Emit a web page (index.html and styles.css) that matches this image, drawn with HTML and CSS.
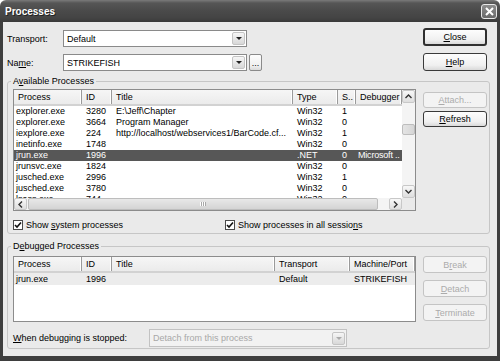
FILE: index.html
```html
<!DOCTYPE html>
<html>
<head>
    <title>Processes</title>
    <link rel="stylesheet" href="styles.css">
</head>
<body>
    <div class="window">
        <div class="titlebar">
            <span class="title">Processes</span>
            <span class="title-close">
                <svg width="9" height="9" viewBox="0 0 9 9"><path d="M1 1L8 8M8 1L1 8" stroke="#fff" stroke-width="2" fill="none"/></svg>
            </span>
        </div>

        <div class="client">
            <!-- Transport / Name -->
            <div class="top">
                <div class="fields">
                    <div class="field-row">
                        <span class="field-label">Transport:</span>
                        <div class="combo">
                            <span class="combo-text">Default</span>
                            <span class="combo-btn"><i class="arrow"></i></span>
                        </div>
                    </div>
                    <div class="field-row">
                        <span class="field-label">Na<u>m</u>e:</span>
                        <div class="combo">
                            <span class="combo-text">STRIKEFISH</span>
                            <span class="combo-btn"><i class="arrow"></i></span>
                        </div>
                        <button class="btn btn-dots">...</button>
                    </div>
                </div>
                <div class="btn-col top-btns">
                    <button class="btn btn-default"><u>C</u>lose</button>
                    <button class="btn"><u>H</u>elp</button>
                </div>
            </div>

            <!-- Available Processes -->
            <fieldset class="group group-available">
                <legend>A<u>v</u>ailable Processes</legend>
                <div class="group-body">
                    <div class="group-main">
                        <div class="listview lv-procs">
                            <div class="lv-main">
                                <div class="lv-head">
                                    <span>Process</span><span>ID</span><span>Title</span><span>Type</span><span>S..</span><span>Debugger</span>
                                </div>
                                <div class="lv-row">
                                    <span>explorer.exe</span><span>3280</span><span>E:\Jeff\Chapter</span><span>Win32</span><span>1</span><span></span>
                                </div>
                                <div class="lv-row">
                                    <span>explorer.exe</span><span>3664</span><span>Program Manager</span><span>Win32</span><span>0</span><span></span>
                                </div>
                                <div class="lv-row">
                                    <span>iexplore.exe</span><span>224</span><span>http://localhost/webservices1/BarCode.cf...</span><span>Win32</span><span>1</span><span></span>
                                </div>
                                <div class="lv-row">
                                    <span>inetinfo.exe</span><span>1748</span><span></span><span>Win32</span><span>0</span><span></span>
                                </div>
                                <div class="lv-row selected">
                                    <span>jrun.exe</span><span>1996</span><span></span><span>.NET</span><span>0</span><span class="tight">Microsoft ..</span>
                                </div>
                                <div class="lv-row">
                                    <span>jrunsvc.exe</span><span>1824</span><span></span><span>Win32</span><span>0</span><span></span>
                                </div>
                                <div class="lv-row">
                                    <span>jusched.exe</span><span>2996</span><span></span><span>Win32</span><span>1</span><span></span>
                                </div>
                                <div class="lv-row">
                                    <span>jusched.exe</span><span>3780</span><span></span><span>Win32</span><span>0</span><span></span>
                                </div>
                                <div class="lv-row">
                                    <span>lsass.exe</span><span>744</span><span></span><span>Win32</span><span>0</span><span></span>
                                </div>
                            </div>
                            <div class="vscroll">
                                <span class="sb-btn"><svg width="7" height="5" viewBox="0 0 7 5"><path d="M0.5 4L3.5 1L6.5 4" stroke="#333" stroke-width="1.4" fill="none"/></svg></span>
                                <span class="sb-track"><span class="sb-thumb v-thumb"></span></span>
                                <span class="sb-btn"><svg width="7" height="5" viewBox="0 0 7 5"><path d="M0.5 1L3.5 4L6.5 1" stroke="#333" stroke-width="1.4" fill="none"/></svg></span>
                            </div>
                            <div class="hscroll">
                                <span class="sb-btn"><svg width="5" height="7" viewBox="0 0 5 7"><path d="M4 0.5L1 3.5L4 6.5" stroke="#333" stroke-width="1.4" fill="none"/></svg></span>
                                <span class="sb-track"><span class="sb-thumb h-thumb"><i class="grip"></i></span></span>
                                <span class="sb-btn"><svg width="5" height="7" viewBox="0 0 5 7"><path d="M1 0.5L4 3.5L1 6.5" stroke="#333" stroke-width="1.4" fill="none"/></svg></span>
                            </div>
                            <div class="corner"></div>
                        </div>
                        <div class="checks">
                            <label class="check-item first">
                                <span class="checkbox"><svg width="8" height="8" viewBox="0 0 8 8"><path d="M1 4L3 6L7 1.5" stroke="#111" stroke-width="1.6" fill="none"/></svg></span>
                                <span>Show <u>s</u>ystem processes</span>
                            </label>
                            <label class="check-item">
                                <span class="checkbox"><svg width="8" height="8" viewBox="0 0 8 8"><path d="M1 4L3 6L7 1.5" stroke="#111" stroke-width="1.6" fill="none"/></svg></span>
                                <span>Show processes in all sessio<u>n</u>s</span>
                            </label>
                        </div>
                    </div>
                    <div class="btn-col group-btns">
                        <button class="btn btn-short" disabled><u>A</u>ttach...</button>
                        <button class="btn btn-short"><u>R</u>efresh</button>
                    </div>
                </div>
            </fieldset>

            <!-- Debugged Processes -->
            <fieldset class="group group-debugged">
                <legend>D<u>e</u>bugged Processes</legend>
                <div class="group-body">
                    <div class="group-main">
                        <div class="listview lv-debugged">
                            <div class="lv-main">
                                <div class="lv-head">
                                    <span>Process</span><span>ID</span><span>Title</span><span>Transport</span><span>Machine/Port</span>
                                </div>
                                <div class="lv-row inactive">
                                    <span>jrun.exe</span><span>1996</span><span></span><span>Default</span><span>STRIKEFISH</span>
                                </div>
                            </div>
                        </div>
                        <div class="stop-row">
                            <span class="stop-label"><u>W</u>hen debugging is stopped:</span>
                            <div class="combo combo-disabled">
                                <span class="combo-text">Detach from this process</span>
                                <span class="combo-btn"><i class="arrow"></i></span>
                            </div>
                        </div>
                    </div>
                    <div class="btn-col group-btns debug-btns">
                        <button class="btn" disabled>B<u>r</u>eak</button>
                        <button class="btn" disabled><u>D</u>etach</button>
                        <button class="btn" disabled><u>T</u>erminate</button>
                    </div>
                </div>
            </fieldset>
        </div>
    </div>
</body>
</html>
```

FILE: styles.css
```css
body {
    margin: 0;
    font-family: "Liberation Sans", Arial, sans-serif;
    font-size: 9px;
    color: #000;
    background: #fff;
}
.window {
    width: 500px;
    height: 361px;
    display: flex;
    flex-direction: column;
}
.titlebar {
    height: 22px;
    flex: none;
    display: flex;
    align-items: center;
    justify-content: space-between;
    padding: 0 3px 0 5px;
    background: linear-gradient(#7a7a7a 0, #565656 3px, #4a4a4a 50%, #444 80%, #3a3a3a 100%);
    border-radius: 6px 6px 0 0;
}
.title {
    color: #fff;
    font-weight: bold;
    font-size: 10px;
    text-shadow: 1px 1px 0 #222;
}
.title-close {
    width: 16px;
    height: 15px;
    box-sizing: border-box;
    border: 1px solid #e8e8e8;
    border-radius: 3px;
    background: linear-gradient(#8c8c8c, #6a6a6a);
    display: flex;
    align-items: center;
    justify-content: center;
}
.client {
    flex: 1;
    background: #eaeaea;
    border: 3px solid #3e3e3e;
    border-top: 0;
    border-bottom-width: 5px;
    padding: 6px 10px 0 4px;
}

/* top fields */
.top {
    display: flex;
    justify-content: space-between;
}
.fields {
    margin-top: 2px;
    display: flex;
    flex-direction: column;
    gap: 7px;
}
.field-row {
    display: flex;
    align-items: center;
    height: 17px;
}
.field-label {
    width: 56px;
}
.combo {
    width: 184px;
    height: 17px;
    box-sizing: border-box;
    border: 1px solid #8a8a8a;
    background: #fff;
    display: flex;
    align-items: center;
    justify-content: space-between;
}
.combo-text {
    padding-left: 3px;
}
.combo-btn {
    width: 13px;
    height: 13px;
    margin-right: 1px;
    box-sizing: border-box;
    border: 1px solid #c4c4c4;
    border-radius: 2px;
    background: linear-gradient(#f6f6f6, #d8d8d8);
    display: flex;
    align-items: center;
    justify-content: center;
}
.arrow {
    width: 0;
    height: 0;
    border-left: 3px solid transparent;
    border-right: 3px solid transparent;
    border-top: 3px solid #222;
}
.combo-disabled {
    width: 198px;
    height: 18px;
    border-color: #c2c2c2;
    background: #f2f2f2;
    color: #a8a8a8;
}
.combo-disabled .arrow {
    border-top-color: #aaa;
}

/* buttons */
.btn {
    font-family: inherit;
    font-size: 9px;
    color: #000;
    height: 17px;
    width: 64px;
    padding: 0;
    box-sizing: border-box;
    border: 1px solid #3a3a3a;
    border-radius: 3px;
    background: linear-gradient(#fdfdfd, #f0f0f0 70%, #d9d9d9);
}
.btn:disabled {
    color: #ababab;
    border-color: #c4c4c4;
    background: #f3f3f3;
}
.btn-default {
    border-width: 2px;
    border-color: #303030;
}
.btn-dots {
    width: 13px;
    margin-left: 2px;
    border-color: #8a8a8a;
    border-radius: 2px;
}
.btn-col {
    display: flex;
    flex-direction: column;
    width: 64px;
}
.top-btns {
    gap: 7px;
}
.top-btns .btn {
    height: 18px;
}

/* group boxes */
.group {
    margin: 5px -3px 0 0;
    padding: 2px 2px 2px 5px;
    border: 1px solid #c6c6c6;
    border-radius: 3px;
    min-inline-size: 0;
}
.group legend {
    padding: 0 2px;
    margin-left: -2px;
    line-height: 11px;
}
.group-debugged {
    margin-top: 7px;
    padding-top: 4px;
    padding-bottom: 1px;
}
.group-body {
    display: flex;
    gap: 7px;
}
.group-main {
    width: 403px;
}
.group-btns {
    margin-top: 3px;
    gap: 3px;
}
.btn-short {
    height: 16px;
}
.debug-btns {
    margin-top: 0;
    gap: 7px;
}

/* list views */
.listview {
    box-sizing: border-box;
    border: 1px solid #8c8c8c;
    background: #fff;
    overflow: hidden;
}
.lv-procs {
    height: 122px;
    display: grid;
    grid-template-columns: 388px 13px;
    grid-template-rows: 108px 12px;
}
.lv-debugged {
    height: 66px;
}
.lv-main {
    overflow: hidden;
}
.lv-head,
.lv-row {
    display: grid;
    white-space: nowrap;
}
.lv-procs .lv-head,
.lv-procs .lv-row {
    grid-template-columns: 68px 30px 181px 45px 18px 46px;
}
.lv-debugged .lv-head,
.lv-debugged .lv-row {
    grid-template-columns: 68px 30px 163px 75px 65px;
}
.lv-head {
    height: 16px;
    line-height: 14px;
    background: linear-gradient(#f6f6f6, #ebebeb);
    border-bottom: 2px solid #d2d2d2;
    box-sizing: border-box;
}
.lv-head span {
    padding-left: 4px;
    border-right: 1px solid #9a9a9a;
    box-shadow: inset -1px 0 0 #fff;
    overflow: hidden;
}
.lv-row {
    height: 11px;
    line-height: 11px;
}
.lv-row span {
    padding-left: 4px;
    overflow: hidden;
}
.lv-row span:first-child {
    padding-left: 2px;
}
.lv-row span.tight {
    padding-left: 2px;
    letter-spacing: -0.2px;
}
.lv-row.selected {
    background: #575757;
    color: #fff;
}
.lv-row.inactive {
    background: #ececec;
    height: 12px;
    line-height: 12px;
}

/* scrollbars */
.vscroll {
    grid-row: 1;
    grid-column: 2;
    display: flex;
    flex-direction: column;
    background: #f4f4f4;
}
.hscroll {
    grid-row: 2;
    grid-column: 1;
    display: flex;
    background: #f4f4f4;
}
.corner {
    grid-row: 2;
    grid-column: 2;
    background: #eaeaea;
}
.sb-btn {
    width: 13px;
    height: 12px;
    flex: none;
    box-sizing: border-box;
    border: 1px solid #c8c8c8;
    border-radius: 2px;
    background: linear-gradient(#f8f8f8, #dedede);
    display: flex;
    align-items: center;
    justify-content: center;
}
.vscroll .sb-btn {
    height: 13px;
}
.sb-track {
    flex: 1;
    display: flex;
}
.vscroll .sb-track {
    flex-direction: column;
}
.sb-thumb {
    box-sizing: border-box;
    border: 1px solid #bdbdbd;
    border-radius: 2px;
    background: linear-gradient(90deg, #e4e4e4, #d6d6d6);
}
.v-thumb {
    margin-top: 21px;
    height: 11px;
}
.h-thumb {
    margin-left: 1px;
    width: 350px;
    display: flex;
    align-items: center;
    justify-content: center;
    background: linear-gradient(#e8e8e8, #d4d4d4);
}
.grip {
    width: 6px;
    height: 4px;
    background: repeating-linear-gradient(90deg, #fff 0 1px, #a8a8a8 1px 2px);
}

/* checks */
.checks {
    display: flex;
    margin-top: 8px;
    height: 12px;
    align-items: center;
}
.check-item {
    display: flex;
    align-items: center;
    gap: 3px;
}
.check-item.first {
    width: 212px;
}
.checkbox {
    width: 10px;
    height: 10px;
    box-sizing: border-box;
    border: 1px solid #4a4a4a;
    background: #fff;
    display: flex;
    align-items: center;
    justify-content: center;
}

/* bottom row */
.stop-row {
    display: flex;
    align-items: center;
    margin-top: 7px;
    height: 18px;
}
.stop-label {
    width: 136px;
}
```
